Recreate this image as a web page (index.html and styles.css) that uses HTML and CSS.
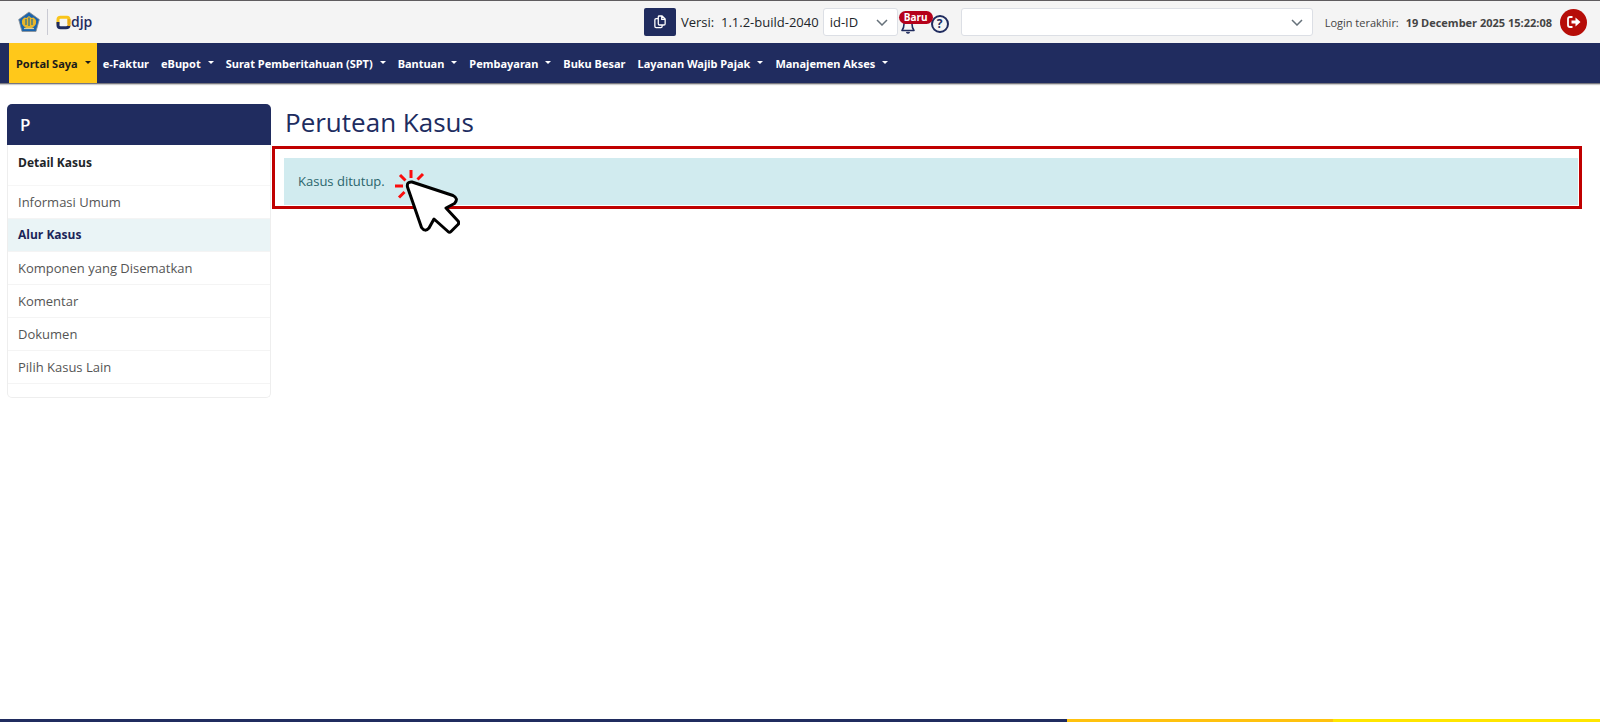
FILE: index.html
```
<!DOCTYPE html>
<html lang="id">
<head>
<meta charset="UTF-8" />
<meta name="viewport" content="width=device-width, initial-scale=1" />
<title>Perutean Kasus</title>
<link rel="stylesheet" href="styles.css">
</head>
<body>

<header class="topbar">
  <a href="#" class="logo" aria-label="djp">
    <svg class="emblem" viewBox="0 0 22 22" width="22" height="22">
      <path d="M11 1 L21.300 8.500 L18 20.500 H4 L.7 8.500 Z" fill="#1b64ad" stroke="#8d9093" stroke-width=".8" />
      <path d="M6.500 6.500 Q1.500 10 5.500 15 L8 17 H14 L16.500 15 Q20.500 10 15.500 6.500 L13.500 7 L11 5 L8.500 7 Z" fill="#e8b62c" />
      <path d="M8 8 V14 M11 6.500 V15 M14 8 V14" stroke="#276f91" stroke-width="1.200" />
      <path d="M6 17.500 H16" stroke="#d9cf9a" stroke-width="1.200" />
    </svg>
    <span class="divider"></span>
    <svg class="mark" viewBox="0 0 15 15" width="15" height="15">
      <path d="M2 9.500 V4.500 Q2 2.200 4.500 2.200 H11 Q13 2.200 13 4.500 V9" fill="none" stroke="#f9c51c" stroke-width="3" />
      <path d="M2 7 V10.500 Q2 12.700 4.500 12.700 H10 Q13 12.700 13 10.500" fill="none" stroke="#1f2b5e" stroke-width="3" />
      <path d="M13 4 V11" stroke="#e9a814" stroke-width="3" />
    </svg>
    <span class="logo-text">djp</span>
  </a>

  <div class="tools">
    <button type="button" class="copy-btn" aria-label="Salin">
      <svg viewBox="0 0 14 16" width="12" height="14" fill="none" stroke="#fff" stroke-width="1.500" stroke-linejoin="round">
        <path d="M5.500 1 H9.500 L13 4.500 V10 Q13 11.500 11.500 11.500 H6.500 Q5 11.500 5 10 V2 Q5 1 6 1 Z M9 1 V5 H13" />
        <path d="M5 4 H2.500 Q1 4 1 5.500 V13 Q1 14.500 2.500 14.500 H8 Q9.500 14.500 9.500 13 V11.500" />
      </svg>
    </button>
    <span class="version">Versi:&nbsp; 1.1.2-build-2040</span>
    <div class="select-wrap lang">
      <select aria-label="Bahasa"><option>id-ID</option></select>
      <svg viewBox="0 0 12 7" width="12" height="7"><path d="M1 1 L6 6 L11 1" /></svg>
    </div>
    <button type="button" class="bell" aria-label="Notifikasi">
      <svg viewBox="0 0 14 16" width="14" height="16" fill="none" stroke="#1f2b5e" stroke-width="1.600" stroke-linejoin="round">
        <path d="M7 1 Q3 1 3 6 Q3 10 1 12.500 H13 Q11 10 11 6 Q11 1 7 1 Z" />
        <path d="M5.500 14 Q7 16 8.500 14" />
      </svg>
      <span class="badge">Baru</span>
    </button>
    <button type="button" class="help" aria-label="Bantuan">?</button>
    <div class="select-wrap account">
      <select aria-label="Wajib Pajak"><option></option></select>
      <svg viewBox="0 0 12 7" width="12" height="7"><path d="M1 1 L6 6 L11 1" /></svg>
    </div>
    <span class="last-login">Login terakhir: <b>19 December 2025 15:22:08</b></span>
    <button type="button" class="logout" aria-label="Keluar">
      <svg viewBox="0 0 16 14" width="16" height="14">
        <path d="M6.500 2 H4 Q2 2 2 4 V10 Q2 12 4 12 H6.500" fill="none" stroke="#fff" stroke-width="1.800" />
        <path d="M5.500 5.500 H9.500 V2.500 L14.500 7 L9.500 11.500 V8.500 H5.500 Z" fill="#fff" />
      </svg>
    </button>
  </div>
</header>

<nav class="menu">
  <a href="#" class="active caret">Portal Saya</a>
  <a href="#">e-Faktur</a>
  <a href="#" class="caret">eBupot</a>
  <a href="#" class="caret">Surat Pemberitahuan (SPT)</a>
  <a href="#" class="caret">Bantuan</a>
  <a href="#" class="caret">Pembayaran</a>
  <a href="#">Buku Besar</a>
  <a href="#" class="caret">Layanan Wajib Pajak</a>
  <a href="#" class="caret">Manajemen Akses</a>
</nav>

<div class="page">
  <aside class="sidebar">
    <div class="sidebar-head">P</div>
    <h2>Detail Kasus</h2>
    <ul>
      <li><a href="#">Informasi Umum</a></li>
      <li><a href="#" class="current">Alur Kasus</a></li>
      <li><a href="#">Komponen yang Disematkan</a></li>
      <li><a href="#">Komentar</a></li>
      <li><a href="#">Dokumen</a></li>
      <li><a href="#">Pilih Kasus Lain</a></li>
    </ul>
  </aside>

  <main class="content">
    <h1>Perutean Kasus</h1>
    <div class="highlight">
      <div class="alert">Kasus ditutup.</div>
      <svg class="pointer" viewBox="0 0 66 66" width="66" height="66" fill="none" stroke-linecap="round" stroke-linejoin="round">
        <path d="M1 17 H9 M6 6 L11.500 11.500 M17 1 V9 M29 5 L23.500 10.500 M5 28.500 L10.500 23" stroke="#fb0d0d" stroke-width="3" stroke-linecap="butt" />
        <path d="M13.500 18 Q12.500 12.500 18 13 L59 26.500 Q65 29.500 60.500 34.500 L52 39 L64 52 Q65.500 54 64 55.500 L57 62.500 Q55.500 64 54 62.500 L40 50 L35 59 Q31 63.500 27.500 58.500 Z" fill="#fff" stroke="#000" stroke-width="3" />
      </svg>
    </div>
  </main>
</div>

<footer class="stripe"></footer>

</body>
</html>
```
FILE: styles.css
```
* {
  box-sizing: border-box;
}

body {
  margin: 0;
  min-height: 100vh;
  display: flex;
  flex-direction: column;
  font-family: "Open Sans", "Noto Sans", sans-serif;
  font-size: 13px;
  color: #212529;
  background: #fff;
}

a {
  text-decoration: none;
}

button {
  font-family: inherit;
  padding: 0;
  border: none;
  cursor: pointer;
}

/* Top bar */
.topbar {
  display: flex;
  align-items: center;
  justify-content: space-between;
  height: 43px;
  padding: 0 13px 0 18px;
  border-top: 1px solid #5f5c5f;
  background: #f4f4f4;
}

.logo {
  display: flex;
  align-items: center;
}

.divider {
  width: 1px;
  height: 26px;
  margin: 0 8px 0 7px;
  background: #c9cad3;
}

.logo-text {
  font-size: 14px;
  font-weight: 600;
  line-height: 20px;
  color: #1f2b5e;
}

.tools {
  display: flex;
  align-items: center;
}

.copy-btn {
  display: flex;
  align-items: center;
  justify-content: center;
  width: 32px;
  height: 28px;
  border-radius: 2px;
  background: #202c5f;
}

.version {
  margin: 0 4px 0 5px;
  white-space: nowrap;
}

.select-wrap {
  position: relative;
}

.select-wrap select {
  appearance: none;
  display: block;
  width: 100%;
  height: 28px;
  padding: 0 6px;
  border: 1px solid #dcdfe5;
  border-radius: 3px;
  background: #fff;
  font-family: inherit;
  font-size: 13px;
  color: #212529;
}

.select-wrap svg {
  position: absolute;
  right: 10px;
  top: 11px;
  fill: none;
  stroke: #66717a;
  stroke-width: 1.500;
  pointer-events: none;
}

.lang {
  width: 75px;
}

.account {
  width: 352px;
  margin-left: 12px;
}

.bell {
  position: relative;
  display: flex;
  align-items: flex-end;
  width: 30px;
  height: 23px;
  margin-left: 3px;
  background: none;
}

.badge {
  position: absolute;
  left: -2px;
  top: 0;
  padding: 0 5px;
  border-radius: 7px;
  background: #b5001a;
  color: #fff;
  font-size: 10px;
  font-weight: bold;
  line-height: 13px;
}

.help {
  width: 18px;
  height: 18px;
  margin-top: 4px;
  border: 2px solid #202c5f;
  border-radius: 50%;
  background: none;
  color: #202c5f;
  font-size: 12px;
  font-weight: bold;
  line-height: 14px;
}

.last-login {
  margin: 0 8px 0 12px;
  font-size: 11px;
  color: #444;
  white-space: nowrap;
}

.last-login b {
  margin-left: 4px;
}

.logout {
  display: flex;
  align-items: center;
  justify-content: center;
  width: 27px;
  height: 27px;
  border-radius: 50%;
  background: #b60d08;
}

/* Main menu */
.menu {
  display: flex;
  height: 41px;
  padding-left: 9px;
  background: #202c5f;
  border-bottom: 1px solid #77777f;
  box-shadow: 0 1px 1px #ccc;
  font-family: "Noto Sans", sans-serif;
}

.menu a {
  display: flex;
  align-items: center;
  padding: 0 6px;
  color: #fff;
  font-size: 11px;
  font-weight: bold;
  white-space: nowrap;
}

.menu .active {
  padding-left: 7px;
  background: #ffc81a;
  color: #1b1b1b;
}

.caret::after {
  content: "";
  margin: 0 0 2px 7px;
  border: 3px solid transparent;
  border-top-color: currentColor;
  border-bottom: none;
}

/* Page */
.page {
  flex: 1;
  display: flex;
  align-items: flex-start;
  padding: 20px 18px 20px 7px;
}

.sidebar {
  flex: none;
  width: 264px;
  padding-bottom: 13px;
  border: 1px solid #eee;
  border-top: none;
  border-radius: 5px;
}

.sidebar-head {
  height: 41px;
  margin: 0 -1px;
  padding: 0 13px;
  border-radius: 5px 5px 0 0;
  background: #202c5f;
  color: #fff;
  font-size: 17px;
  font-weight: 600;
  line-height: 42px;
}

.sidebar h2 {
  height: 41px;
  margin: 0;
  padding: 0 10px;
  border-bottom: 1px solid #f6f6f6;
  font-size: 12px;
  line-height: 36px;
}

.sidebar ul {
  margin: 0;
  padding: 0;
  list-style: none;
}

.sidebar li {
  border-bottom: 1px solid #f4f4f4;
}

.sidebar li a {
  display: block;
  padding: 0 10px;
  color: #555;
  line-height: 32px;
}

.sidebar li .current {
  background: #eaf4f6;
  color: #1b2559;
  font-size: 12px;
  font-weight: bold;
}

.content {
  flex: 1;
  min-width: 0;
}

.content h1 {
  margin: 0 0 6px 14px;
  color: #202c5f;
  font-size: 26px;
  font-weight: 400;
  line-height: 36px;
}

.highlight {
  position: relative;
  margin-left: 1px;
  padding: 9px 1px 1px 9px;
  border: 3px solid #c00000;
}

.alert {
  padding: 0 14px;
  background: #d1ebef;
  color: #2a656c;
  line-height: 47px;
}

.pointer {
  position: absolute;
  left: 119px;
  top: 20px;
}

.stripe {
  height: 3px;
  background: linear-gradient(to right, #202c5f 66.7%, #ffc20e 66.7% 83.3%, #ffe600 83.3%);
}
```
